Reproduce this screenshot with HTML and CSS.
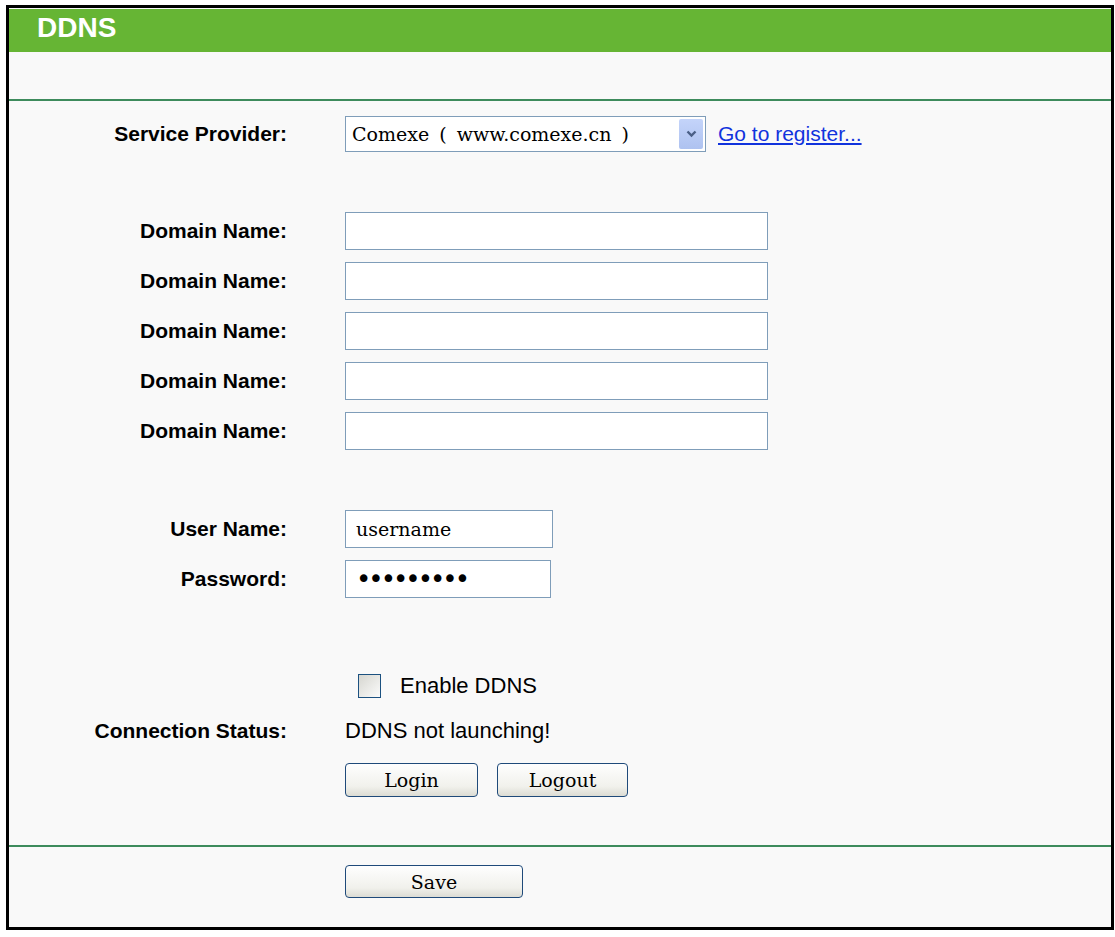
FILE: index.html
```html
<!DOCTYPE html>
<html lang="en">
<head>
  <meta charset="UTF-8">
  <meta name="viewport" content="width=device-width, initial-scale=1.0">
  <link rel="stylesheet" href="styles.css">
  <title>DDNS</title>
</head>
<body>

  <div class="frame">
    <div class="title">DDNS</div>
    <div class="blank"></div>
    <div class="rule"></div>

    <div class="form">
      <div class="row provider">
        <label class="label">Service Provider:</label>
        <div class="field">
          <div class="select-wrap">
            <select class="select">
              <option>Comexe ( www.comexe.cn )</option>
            </select>
            <span class="select-btn">
              <svg width="11" height="8" viewBox="0 0 11 8"><path d="M1.5 1.5 L5.5 5.5 L9.5 1.5" fill="none" stroke="#4a5f86" stroke-width="2.4"/></svg>
            </span>
          </div>
          <a class="link" href="#">Go to register...</a>
        </div>
      </div>

      <div class="group domains">
        <div class="row"><label class="label">Domain Name:</label><input class="text wide" type="text"></div>
        <div class="row"><label class="label">Domain Name:</label><input class="text wide" type="text"></div>
        <div class="row"><label class="label">Domain Name:</label><input class="text wide" type="text"></div>
        <div class="row"><label class="label">Domain Name:</label><input class="text wide" type="text"></div>
        <div class="row"><label class="label">Domain Name:</label><input class="text wide" type="text"></div>
      </div>

      <div class="group account">
        <div class="row"><label class="label">User Name:</label><input class="text short" type="text" value="username"></div>
        <div class="row"><label class="label">Password:</label><input class="text short pass" type="password" value="123456789"></div>
      </div>

      <div class="row check-row">
        <span class="label"></span>
        <label class="check"><input type="checkbox" class="box"> Enable DDNS</label>
      </div>

      <div class="row status-row">
        <span class="label">Connection Status:</span>
        <span class="status">DDNS not launching!</span>
      </div>

      <div class="row btn-row">
        <span class="label"></span>
        <div class="buttons">
          <button class="btn login">Login</button>
          <button class="btn logout">Logout</button>
        </div>
      </div>
    </div>

    <div class="rule rule-bottom"></div>

    <div class="row save-row">
      <span class="label"></span>
      <div><button class="btn save">Save</button></div>
    </div>
  </div>

</body>
</html>
```

FILE: styles.css
```css
*{
  margin: 0;
  padding: 0;
  box-sizing: border-box;
}
body{
  background: #fff;
  font-family: "Liberation Sans", Arial, sans-serif;
  color: #000;
}
.frame{
  margin: 5px 0 0 6px;
  width: 1108px;
  height: 925px;
  border: 3px solid #000;
  background: #f9f9f9;
}
.title{
  margin-top: 1px;
  height: 43px;
  line-height: 37px;
  padding-left: 28px;
  background: #66b534;
  color: #fff;
  font-size: 28px;
  font-weight: bold;
}
.blank{
  height: 47px;
}
.rule{
  height: 2px;
  background: #3d8b5c;
}
.rule-bottom{
  margin-top: 48px;
}
.row{
  display: grid;
  grid-template-columns: 278px 1fr;
  column-gap: 58px;
  align-items: center;
}
.label{
  text-align: right;
  font-weight: bold;
  font-size: 21px;
}
.provider{
  margin-top: 15px;
}
.field{
  display: flex;
  align-items: center;
  gap: 12px;
}
.select-wrap{
  position: relative;
  width: 361px;
  height: 36px;
}
.select{
  appearance: none;
  -webkit-appearance: none;
  width: 100%;
  height: 100%;
  border: 1px solid #7f9db9;
  background: #fff;
  padding-left: 6px;
  font-family: "DejaVu Serif", serif;
  font-size: 19px;
  word-spacing: 4px;
  color: #000;
  outline: none;
}
.select-btn{
  position: absolute;
  right: 3px;
  top: 3px;
  width: 24px;
  height: 30px;
  border-radius: 2px;
  background: linear-gradient(#c4d4fa, #aec2f0);
  display: flex;
  align-items: center;
  justify-content: center;
  pointer-events: none;
}
.link{
  color: #1133dd;
  font-size: 21px;
  text-decoration: underline;
}
.group{
  display: flex;
  flex-direction: column;
  gap: 12px;
  margin-top: 60px;
}
.text{
  height: 38px;
  border: 1px solid #7f9db9;
  background: #fff;
  padding-left: 10px;
  font-family: "DejaVu Serif", serif;
  font-size: 19px;
  color: #000;
  outline: none;
}
.wide{
  width: 423px;
}
.short{
  width: 208px;
}
.pass{
  width: 206px;
  font-family: "DejaVu Sans", sans-serif;
  font-size: 26px;
  letter-spacing: -3px;
}
.check-row{
  margin-top: 75px;
  height: 24px;
}
.check{
  display: flex;
  align-items: center;
  gap: 19px;
  padding-left: 13px;
  font-size: 22px;
}
.box{
  appearance: none;
  -webkit-appearance: none;
  width: 23px;
  height: 24px;
  border: 1px solid #1c5180;
  background: linear-gradient(135deg, #d6d6d0, #fbfbfa);
}
.status-row{
  margin-top: 21px;
  height: 24px;
}
.status{
  font-size: 22px;
}
.btn-row{
  margin-top: 21px;
}
.buttons{
  display: flex;
  gap: 19px;
}
.btn{
  height: 34px;
  border: 1px solid #1f4a7a;
  border-radius: 4px;
  background: linear-gradient(#fefefe, #f1f1ec 70%, #dcdcd4);
  font-family: "DejaVu Serif", serif;
  font-size: 19px;
  color: #000;
}
.login{
  width: 133px;
}
.logout{
  width: 131px;
}
.save-row{
  margin-top: 18px;
}
.save{
  width: 178px;
  height: 33px;
}
```
